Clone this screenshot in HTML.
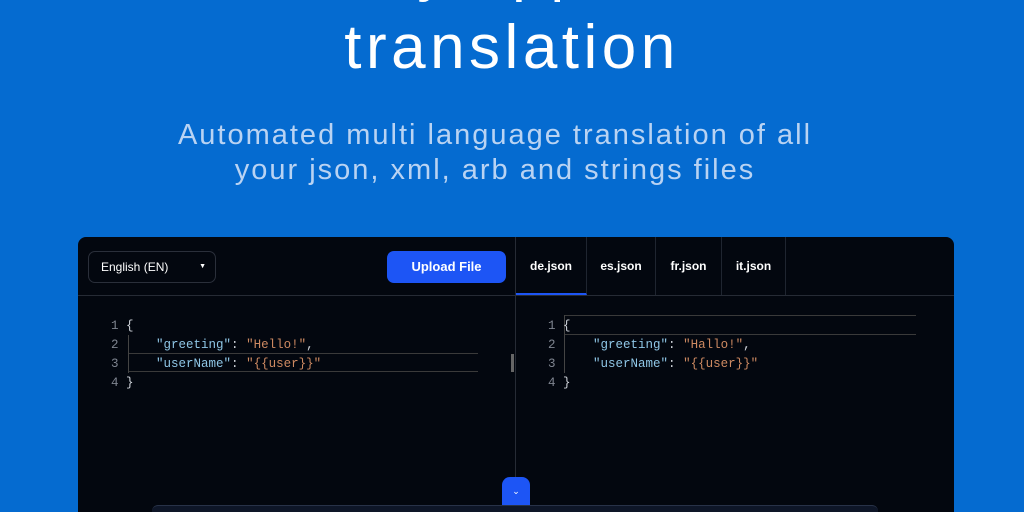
<!DOCTYPE html>
<html><head><meta charset="utf-8"><style>
*{margin:0;padding:0;box-sizing:border-box}
html,body{width:1024px;height:512px;overflow:hidden}
body{background:#056bd0;font-family:"Liberation Sans",sans-serif;position:relative}
.t{position:absolute;left:0;width:1024px;text-align:center;color:#fff}
.card{position:absolute;left:78px;top:237px;width:876px;height:275px;background:#03070f;border-radius:8px 8px 0 0;overflow:hidden}
.mono{font-family:"Liberation Mono",monospace;font-size:12.5px;position:absolute;white-space:pre}
.k{color:#8fc6e6}.s{color:#ce8a62}.p{color:#cfd3da}.n{color:#7f8590}
.tab{position:absolute;top:0;height:58px;color:#fff;font-weight:bold;font-size:12px;line-height:58px;text-align:center;border-right:1px solid #1f2530}
</style></head><body>
<div class="t" style="top:-66px;font-size:62px;line-height:70px;letter-spacing:4px">Easy app and</div>
<div class="t" style="top:13px;font-size:62px;line-height:70px;letter-spacing:4.5px">translation</div>
<div class="t" style="top:118px;left:-17px;font-size:29px;line-height:35px;color:#b9d3f3;letter-spacing:2px">Automated multi language translation of all<br>your json, xml, arb and strings files</div>
<div class="card">
 <div style="position:absolute;left:0;top:58px;width:876px;height:1px;background:#262b35"></div>
 <div style="position:absolute;left:437px;top:0;width:1px;height:290px;background:#262b35"></div>
 <div style="position:absolute;left:10px;top:14px;width:128px;height:32px;border:1px solid #2a2f3a;border-radius:7px;color:#fff;font-size:12px;line-height:30px;padding-left:12px">English (EN)<span style="position:absolute;right:9px;top:0;font-size:7px">▼</span></div>
 <div style="position:absolute;left:309px;top:14px;width:119px;height:32px;background:#1d55f5;border-radius:7px;color:#fff;font-weight:bold;font-size:13px;line-height:32px;text-align:center">Upload File</div>
 <div class="tab" style="left:438px;width:71px;border-bottom:2px solid #1d55f5">de.json</div>
 <div class="tab" style="left:509px;width:69px">es.json</div>
 <div class="tab" style="left:578px;width:66px">fr.json</div>
 <div class="tab" style="left:644px;width:64px">it.json</div>
 <div style="position:absolute;left:50px;top:116px;width:350px;height:19px;border-top:1px solid #3a3a3a;border-bottom:1px solid #3a3a3a"></div>
 <div style="position:absolute;left:50px;top:98px;width:1px;height:38px;background:#444"></div>
 <div class="mono" style="left:33px;top:80px;line-height:19px"><span class="n">1</span> <span class="p">{</span>
<span class="n">2</span>     <span class="k">"greeting"</span><span class="p">: </span><span class="s">"Hello!"</span><span class="p">,</span>
<span class="n">3</span>     <span class="k">"userName"</span><span class="p">: </span><span class="s">"{{user}}"</span>
<span class="n">4</span> <span class="p">}</span></div>
 <div style="position:absolute;left:486px;top:78px;width:352px;height:20px;border-top:1px solid #3a3a3a;border-bottom:1px solid #3a3a3a"></div>
 <div style="position:absolute;left:486px;top:78px;width:1px;height:58px;background:#444"></div>
 <div class="mono" style="left:470px;top:80px;line-height:19px"><span class="n">1</span> <span class="p">{</span>
<span class="n">2</span>     <span class="k">"greeting"</span><span class="p">: </span><span class="s">"Hallo!"</span><span class="p">,</span>
<span class="n">3</span>     <span class="k">"userName"</span><span class="p">: </span><span class="s">"{{user}}"</span>
<span class="n">4</span> <span class="p">}</span></div>
 <div style="position:absolute;left:433px;top:117px;width:3px;height:18px;background:#666"></div>
 <div style="position:absolute;left:424px;top:240px;width:28px;height:40px;background:#1d55f5;border-radius:8px 8px 0 0;color:#fff;font-size:9px;text-align:center;padding-top:9px">⌄</div>
</div>
<div style="position:absolute;left:152px;top:505px;width:726px;height:20px;background:#0e1628;border-radius:6px;border-top:1px solid #283248"></div>
</body></html>
